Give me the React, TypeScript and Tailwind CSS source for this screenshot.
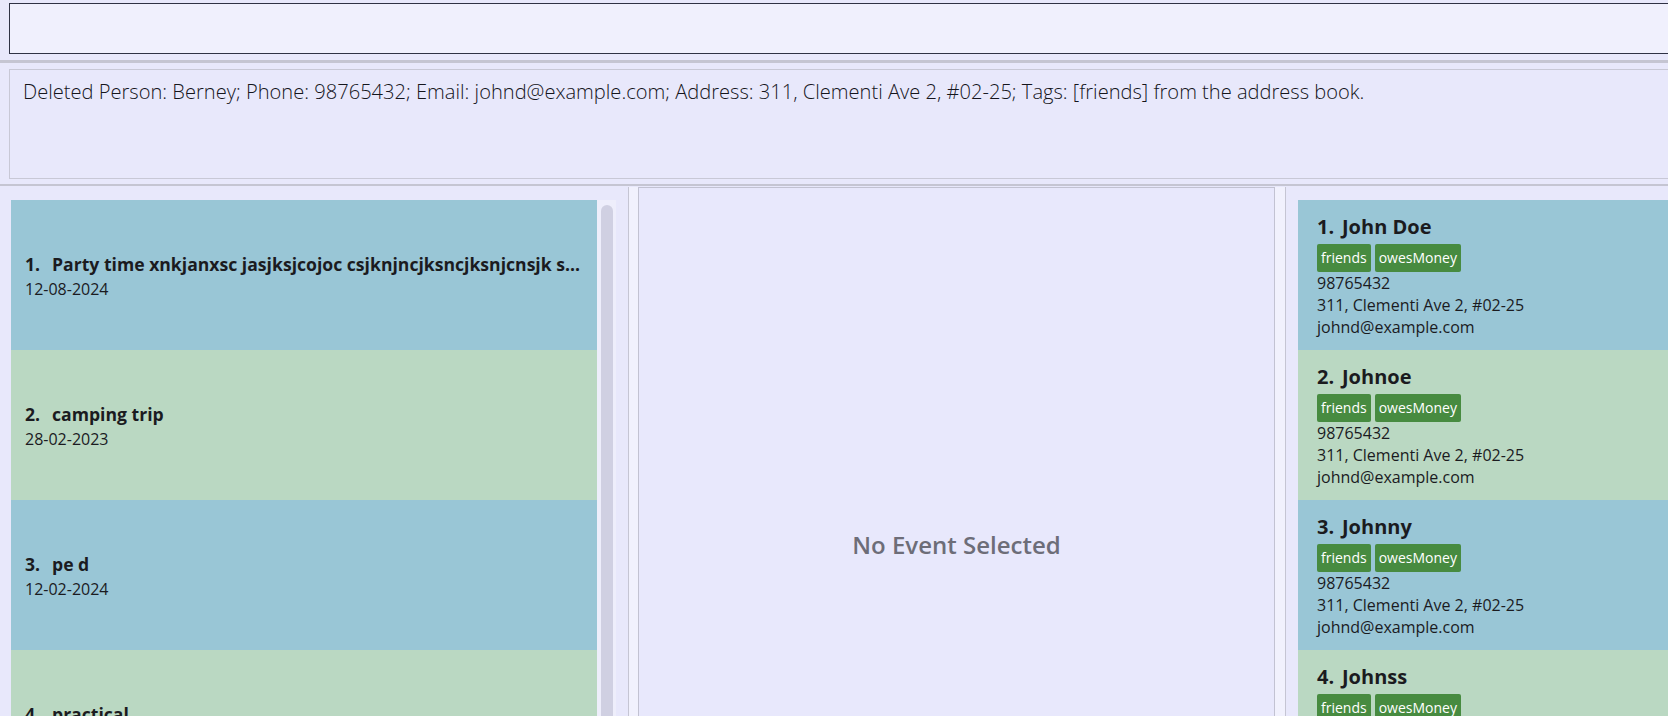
const events = [
  { id: 1, name: "Party time xnkjanxsc jasjksjcojoc csjknjncjksncjksnjcnsjk s...", date: "12-08-2024" },
  { id: 2, name: "camping trip", date: "28-02-2023" },
  { id: 3, name: "pe d", date: "12-02-2024" },
  { id: 4, name: "practical", date: "01-03-2024" },
];

const persons = [
  { id: 1, name: "John Doe" },
  { id: 2, name: "Johnoe" },
  { id: 3, name: "Johnny" },
  { id: 4, name: "Johnss" },
];

function EventCard({ index, name, date }: { index: number; name: string; date: string }) {
  const bg = index % 2 === 1 ? "bg-[#99c6d6]" : "bg-[#bad8c2]";
  return (
    <div className={`${bg} h-[150px] flex flex-col justify-center pl-[14px]`}>
      <div className="flex text-[17.6px] leading-[28px] font-bold whitespace-nowrap overflow-hidden">
        <span className="w-[27px] shrink-0">{index}.</span>
        <span>{name}</span>
      </div>
      <div className="text-[16px] leading-[22px]">{date}</div>
    </div>
  );
}

function PersonCard({ index, name }: { index: number; name: string }) {
  const bg = index % 2 === 1 ? "bg-[#99c6d6]" : "bg-[#bad8c2]";
  return (
    <div className={`${bg} h-[150px] flex flex-col justify-center pl-[19px]`}>
      <div className="flex text-[20px] leading-[28px] font-bold">
        <span className="w-[25px] shrink-0">{index}.</span>
        <span>{name}</span>
      </div>
      <div className="flex gap-[4px] mt-[3px]">
        <span className="h-[28px] px-[4px] rounded-[2px] bg-[#478b40] text-white text-[14px] leading-[28px]">friends</span>
        <span className="h-[28px] px-[4px] rounded-[2px] bg-[#478b40] text-white text-[14px] leading-[28px]">owesMoney</span>
      </div>
      <div className="text-[16px] leading-[22px]">98765432</div>
      <div className="text-[16px] leading-[22px]">311, Clementi Ave 2, #02-25</div>
      <div className="text-[16px] leading-[22px]">johnd@example.com</div>
    </div>
  );
}

export default function App() {
  return (
    <div className="h-[716px] w-[1668px] overflow-hidden bg-[#e8e8fb] font-['Open_Sans',sans-serif] text-[#1b1b1f]">
      {/* command box */}
      <div className="pt-[3px] pl-[9px] pb-[6px]">
        <div className="h-[51px] w-[1700px] border border-[#2f3244] bg-[#f0f0fd]" />
      </div>
      <div className="h-[3px] bg-[#c5c5d2]" />

      {/* result display */}
      <div className="pt-[6px] pl-[9px] pb-[5px]">
        <div className="h-[110px] w-[1700px] border border-[#c8c8d6] bg-[#e8e8fb] pl-[13px] pt-[7px]">
          <p className="text-[20.1px] leading-[30px] font-light text-[#15151c]">
            Deleted Person: Berney; Phone: 98765432; Email: johnd@example.com; Address: 311, Clementi Ave 2, #02-25; Tags: [friends] from the address book.
          </p>
        </div>
      </div>
      <div className="h-[2px] bg-[#c5c5d2]" />

      {/* panels */}
      <div className="flex h-[716px] w-[1900px] pt-[1px]">
        {/* event list */}
        <div className="w-[629px] shrink-0 flex border-r border-[#c5c5d3] pt-[13px] pl-[11px]">
          <div className="w-[586px] shrink-0">
            {events.map((e) => (
              <EventCard key={e.id} index={e.id} name={e.name} date={e.date} />
            ))}
          </div>
          <div className="w-[19px] shrink-0 bg-[#eeeefb] pt-[5px] flex justify-center">
            <div className="w-[12px] h-[700px] rounded-full bg-[#d0d0e2]" />
          </div>
        </div>

        <div className="w-[9px] shrink-0 bg-[#f1f1fd]" />

        {/* event detail */}
        <div className="w-[637px] shrink-0 border border-[#c2c2d2] bg-[#e8e8fc] flex items-center justify-center">
          <span className="text-[24px] leading-[34px] font-semibold text-[#6d6d78]">No Event Selected</span>
        </div>

        <div className="w-[10px] shrink-0 bg-[#f1f1fd]" />

        {/* person list */}
        <div className="flex-1 border-l border-[#c5c5d3] pt-[13px] pl-[12px]">
          {persons.map((p) => (
            <PersonCard key={p.id} index={p.id} name={p.name} />
          ))}
        </div>
      </div>
    </div>
  );
}
